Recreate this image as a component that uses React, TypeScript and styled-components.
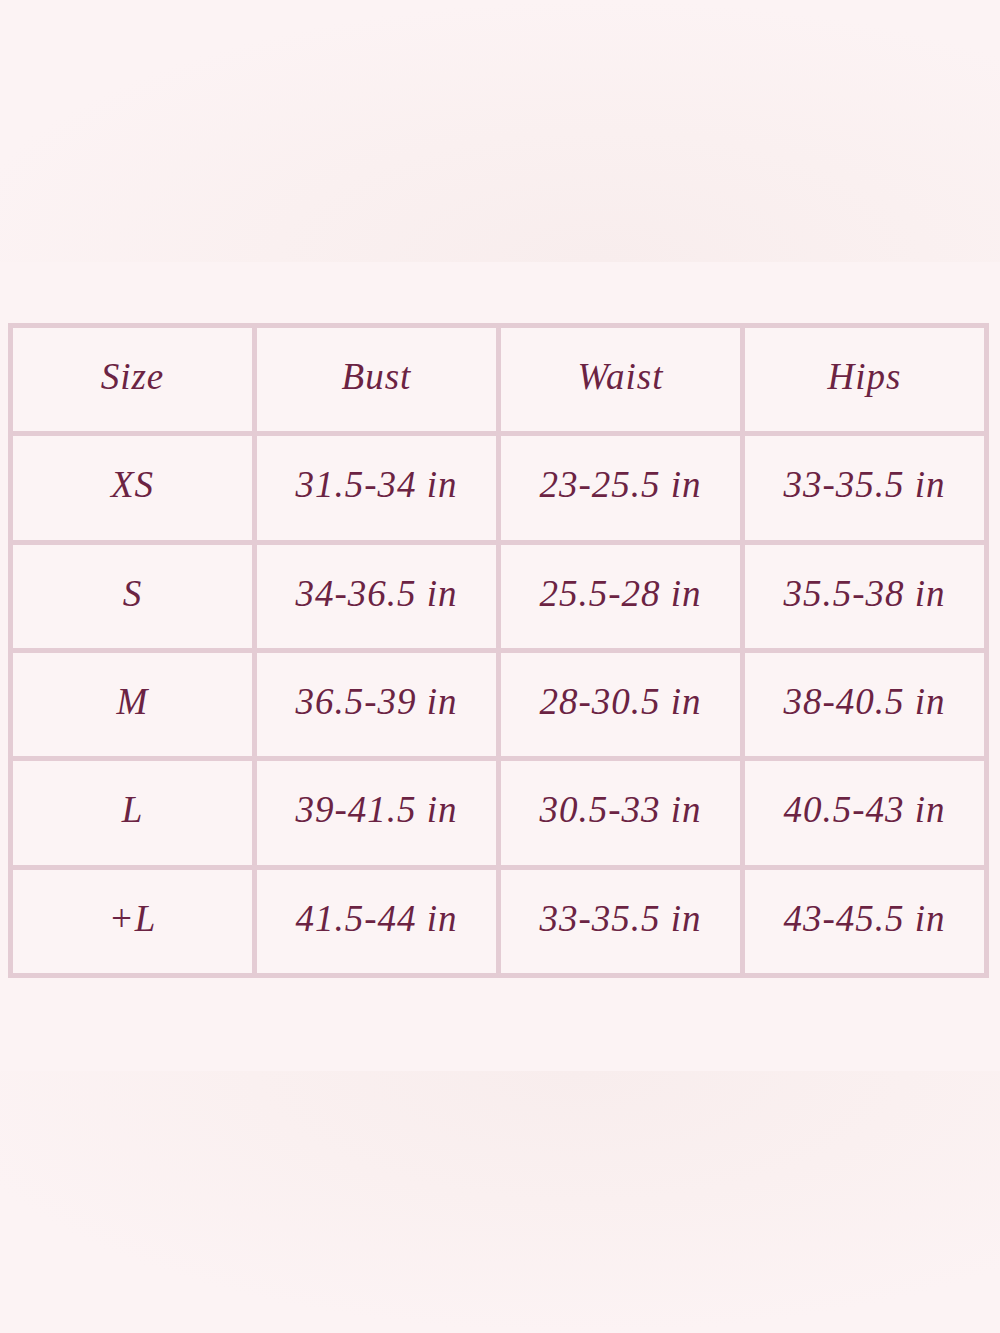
import React from 'react'
import styled, { createGlobalStyle } from 'styled-components'

const GlobalStyle = createGlobalStyle`
  html, body {
    margin: 0;
    padding: 0;
    background: #fcf3f4;
  }
`;

const Page = styled.div`
  width: 1000px;
  height: 1333px;
  display: flex;
  flex-direction: column;
  background: #fcf3f4;
  overflow: hidden;
`;

const Band = styled.div<{ $top?: boolean }>`
  height: 262px;
  flex-shrink: 0;
  background: ${({ $top }) =>
    $top
      ? 'radial-gradient(ellipse 65% 100% at 60% 100%, #f8eded 0%, #faf0f0 50%, #fcf3f4 100%)'
      : 'radial-gradient(ellipse 65% 100% at 58% 0%, #f8eded 0%, #faf0f0 50%, #fcf3f4 100%)'};
`;

const Middle = styled.div`
  flex: 1;
  display: flex;
  align-items: flex-start;
  padding: 61px 0 0 8px;
`;

const Grid = styled.div`
  width: 981px;
  height: 655px;
  box-sizing: border-box;
  display: grid;
  grid-template-columns: repeat(4, 1fr);
  grid-template-rows: repeat(6, 1fr);
  gap: 5px;
  padding: 5px;
  background: #e4ccd4;
`;

const Cell = styled.div`
  background: #fcf4f5;
  display: flex;
  align-items: center;
  justify-content: center;
  font-family: "Liberation Serif", "DejaVu Serif", serif;
  font-style: italic;
  font-size: 37px;
  letter-spacing: 1px;
  color: #6b2343;
  padding-bottom: 6px;
  box-sizing: border-box;
`;

const rows = [
  ['Size', 'Bust', 'Waist', 'Hips'],
  ['XS', '31.5-34 in', '23-25.5 in', '33-35.5 in'],
  ['S', '34-36.5 in', '25.5-28 in', '35.5-38 in'],
  ['M', '36.5-39 in', '28-30.5 in', '38-40.5 in'],
  ['L', '39-41.5 in', '30.5-33 in', '40.5-43 in'],
  ['+L', '41.5-44 in', '33-35.5 in', '43-45.5 in'],
];

const App = () => {
  return (
    <Page>
      <GlobalStyle />
      <Band $top />
      <Middle>
        <Grid>
          {rows.flat().map((text, index) => (
            <Cell key={index}>{text}</Cell>
          ))}
        </Grid>
      </Middle>
      <Band />
    </Page>
  )
}

export default App
